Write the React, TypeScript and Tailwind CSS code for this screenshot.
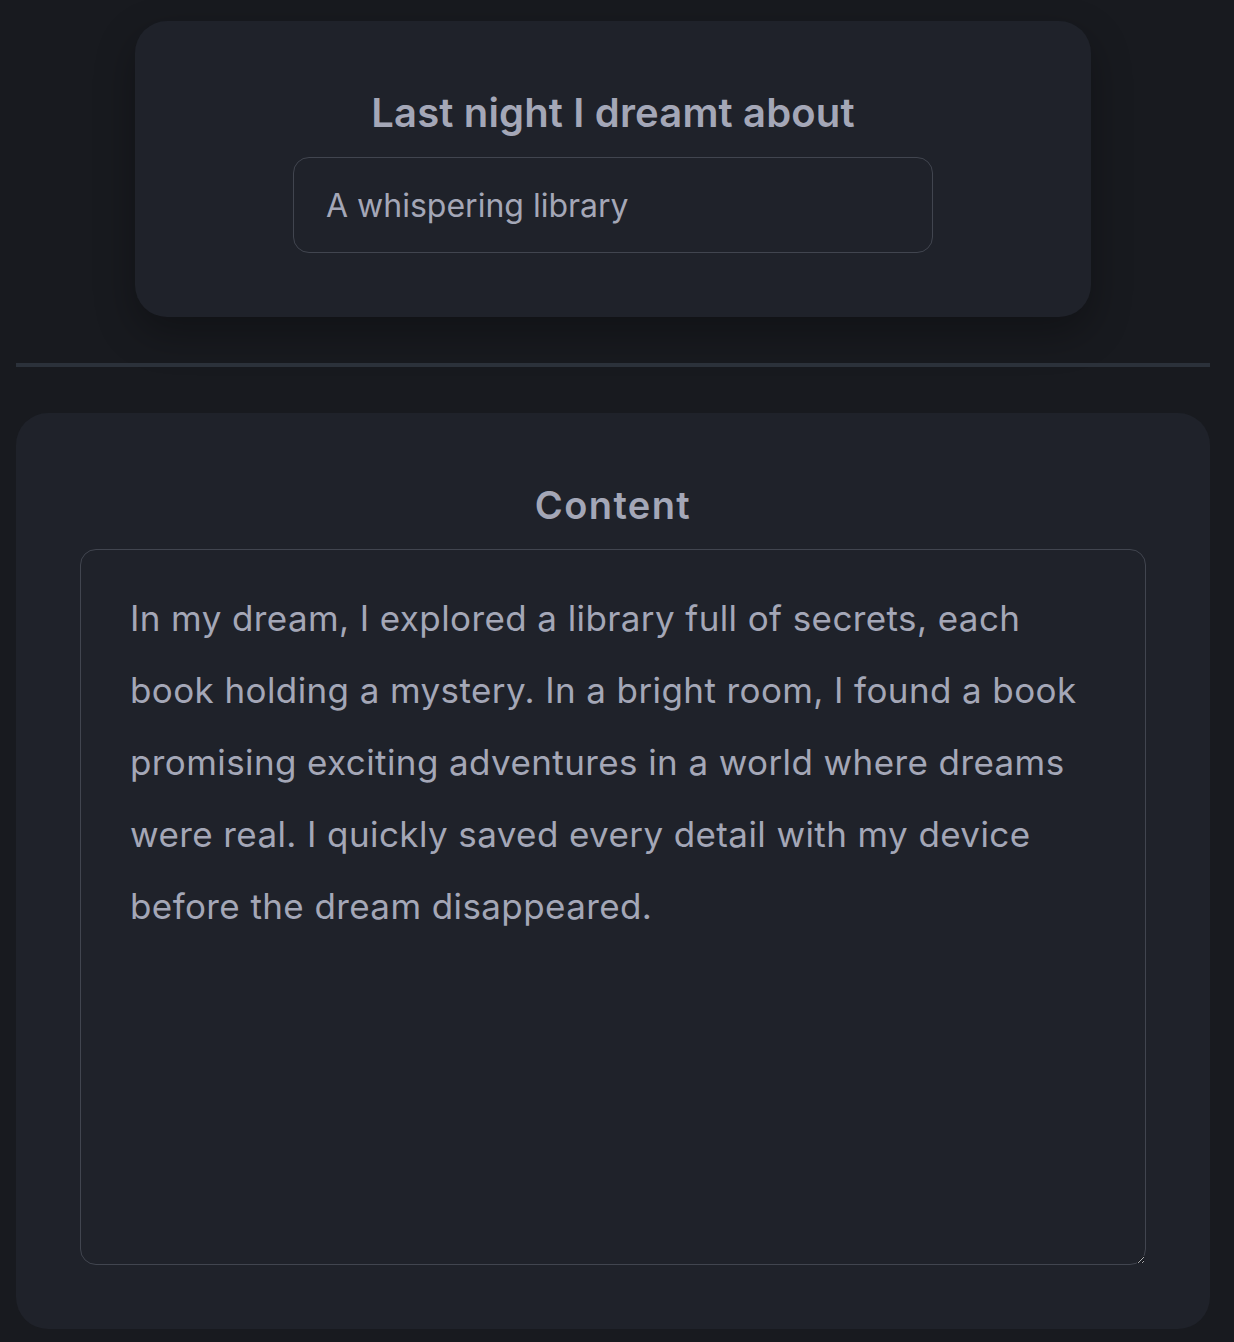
const dream =
  "In my dream, I explored a library full of secrets, each book holding a mystery. In a bright room, I found a book promising exciting adventures in a world where dreams were real. I quickly saved every detail with my device before the dream disappeared.";

const App = () => {
  return (
    <div className="min-h-[1342px] bg-[#181a1f] pl-4 pr-6 pt-[21px] pb-[13px] font-['Inter',sans-serif]">
      {/* Prompt card */}
      <div className="mx-auto flex w-[956px] flex-col items-center rounded-[32px] bg-[#1f222a] pt-[68px] pb-16 shadow-[0_16px_40px_rgba(0,0,0,0.3)]">
        <h2 className="text-[40px] leading-[48px] font-semibold tracking-[0.15px] text-[#a4a7b7]">
          Last night I dreamt about
        </h2>
        <input
          readOnly
          value="A whispering library"
          className="mt-5 h-[96px] w-[640px] rounded-2xl border border-[#41454f] bg-transparent px-8 text-[32px] text-[#a4a7b7] outline-none"
        />
      </div>

      <hr className="mt-[46px] border-t-4 border-[#2b313a]" />

      {/* Content card */}
      <div className="mt-[46px] flex flex-col items-center rounded-[32px] bg-[#1f222a] px-16 pt-[68px] pb-16">
        <h2 className="text-[38px] leading-[48px] font-semibold tracking-[1.4px] text-[#a4a7b7]">
          Content
        </h2>
        <textarea
          readOnly
          defaultValue={dream}
          className="mt-5 h-[716px] w-full rounded-2xl border border-[#41454f] bg-transparent pt-8 pr-12 pl-[49px] text-[35px] leading-[72px] tracking-[0.4px] text-[#a4a7b7] outline-none"
        />
      </div>
    </div>
  );
};

export default App;
